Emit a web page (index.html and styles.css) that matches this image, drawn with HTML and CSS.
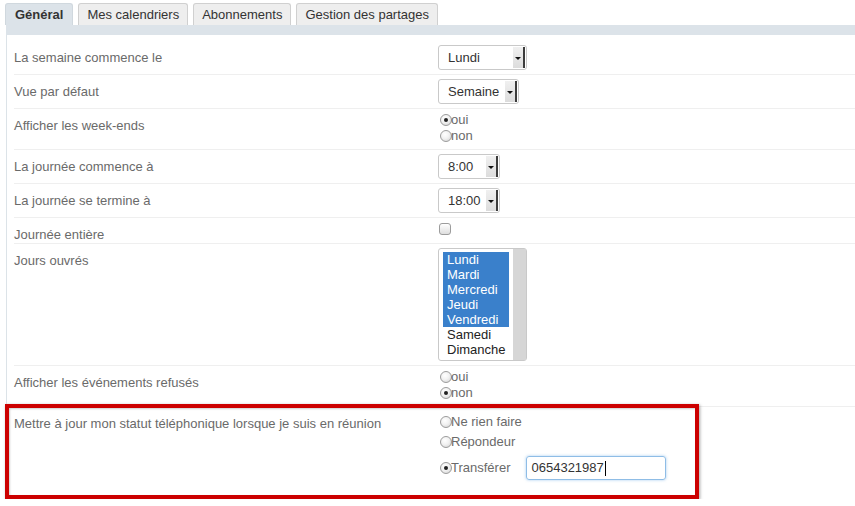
FILE: index.html
```html
<!DOCTYPE html>
<html lang="fr">
<head>
<meta charset="utf-8">
<title>Préférences du calendrier</title>
<link rel="stylesheet" href="styles.css">
</head>
<body>
<ul class="tabs">
  <li class="tab active">Général</li>
  <li class="tab">Mes calendriers</li>
  <li class="tab">Abonnements</li>
  <li class="tab">Gestion des partages</li>
</ul>
<div class="band"></div>
<div class="panel">
  <div class="row">
    <div class="label">La semaine commence le</div>
    <div class="value"><div class="select w-lundi"><span class="sel-text">Lundi</span><span class="arrow"></span></div></div>
  </div>
  <div class="row">
    <div class="label">Vue par défaut</div>
    <div class="value"><div class="select w-semaine"><span class="sel-text">Semaine</span><span class="arrow"></span></div></div>
  </div>
  <div class="row">
    <div class="label">Afficher les week-ends</div>
    <div class="value radios">
      <div class="opt"><span class="radio checked"></span>oui</div>
      <div class="opt"><span class="radio"></span>non</div>
    </div>
  </div>
  <div class="row">
    <div class="label">La journée commence à</div>
    <div class="value"><div class="select w-hour"><span class="sel-text">8:00</span><span class="arrow"></span></div></div>
  </div>
  <div class="row">
    <div class="label">La journée se termine à</div>
    <div class="value"><div class="select w-hour"><span class="sel-text">18:00</span><span class="arrow"></span></div></div>
  </div>
  <div class="row">
    <div class="label">Journée entière</div>
    <div class="value"><div class="check-line"><span class="checkbox"></span></div></div>
  </div>
  <div class="row">
    <div class="label">Jours ouvrés</div>
    <div class="value">
      <div class="listbox">
        <div class="opts">
          <div class="item sel">Lundi</div>
          <div class="item sel">Mardi</div>
          <div class="item sel">Mercredi</div>
          <div class="item sel">Jeudi</div>
          <div class="item sel">Vendredi</div>
          <div class="item">Samedi</div>
          <div class="item">Dimanche</div>
        </div>
        <div class="scrollbar"></div>
      </div>
    </div>
  </div>
  <div class="row">
    <div class="label">Afficher les événements refusés</div>
    <div class="value radios">
      <div class="opt"><span class="radio"></span>oui</div>
      <div class="opt"><span class="radio checked"></span>non</div>
    </div>
  </div>
  <div class="row last">
    <div class="label">Mettre à jour mon statut téléphonique lorsque je suis en réunion</div>
    <div class="value phone">
      <div class="opt tall"><span class="radio"></span>Ne rien faire</div>
      <div class="opt tall"><span class="radio"></span>Répondeur</div>
      <div class="opt transfer"><span class="radio checked"></span>Transférer<div class="input"><span class="input-text">0654321987</span><span class="caret"></span></div></div>
    </div>
    <div class="highlight"></div>
  </div>
</div>
</body>
</html>
```

FILE: styles.css
```css
* { box-sizing: border-box; }

body {
  margin: 0;
  background: #fff;
  font-family: "Liberation Sans", Arial, sans-serif;
  font-size: 13px;
  color: #6a6a6a;
}

.tabs {
  display: flex;
  gap: 5px;
  margin: 0;
  padding: 3px 0 0 5px;
  list-style: none;
}

.tab {
  height: 22px;
  line-height: 21px;
  padding: 0 8px;
  border: 1px solid #d0d0d0;
  border-bottom: none;
  border-radius: 3px 3px 0 0;
  background: #eeeeee;
  color: #333;
}

.tab.active {
  background: #dce3e9;
  border-color: #d0d8de;
  font-weight: bold;
  padding: 0 9px;
}

.band {
  margin-left: 6px;
  height: 10px;
  background: #dce3e9;
}

.panel {
  margin-left: 6px;
  border-left: 1px solid #dce3e8;
  padding: 6px 0 0 7px;
}

.row {
  display: grid;
  grid-template-columns: 424px 1fr;
  border-bottom: 1px solid #efefef;
}

.row.last {
  position: relative;
  border-bottom: none;
  height: 92px;
}

.label {
  padding-top: 9px;
  line-height: 15px;
}

.value {
  padding: 4px 0;
}

.value.radios {
  padding: 3px 0 5px;
}

.value.phone {
  padding: 5px 0 0;
}

/* select */
.select {
  display: flex;
  height: 25px;
  border: 1px solid #c9c9c9;
  border-radius: 3px;
  background: #fff;
  color: #333;
  padding: 1px 1px 1px 0;
}

.w-lundi { width: 89px; }
.w-semaine { width: 81px; }
.w-hour { width: 62px; }

.sel-text {
  flex: 1;
  padding-left: 9px;
  line-height: 21px;
}

.arrow {
  width: 12px;
  background: linear-gradient(#f0f0f0, #dcdcdc);
  border-right: 2px solid #3c3c3c;
  display: flex;
  align-items: center;
  justify-content: center;
}

.arrow::after {
  content: "";
  border-left: 3px solid transparent;
  border-right: 3px solid transparent;
  border-top: 3px solid #111;
  margin-top: 2px;
}

/* radios */
.opt {
  display: flex;
  align-items: center;
  line-height: 16px;
  height: 16px;
}

.opt.tall {
  line-height: 20px;
  height: 20px;
}

.opt.transfer {
  margin-top: 4px;
  height: 24px;
}

.radio {
  width: 12px;
  height: 12px;
  margin: 0 -1px 0 2px;
  border: 1px solid #9c9c9c;
  border-radius: 50%;
  background: radial-gradient(circle at 40% 35%, #ffffff 0%, #f2f2f2 45%, #cfcfcf 100%);
  display: inline-flex;
  align-items: center;
  justify-content: center;
  flex: none;
}

.radio.checked::after {
  content: "";
  width: 4px;
  height: 4px;
  border-radius: 50%;
  background: #222;
}

/* checkbox */
.check-line {
  height: 17px;
  padding-top: 1px;
}

.checkbox {
  display: block;
  width: 12px;
  height: 12px;
  margin-left: 1px;
  border: 1px solid #9c9c9c;
  border-radius: 3px;
  background: linear-gradient(#ffffff, #dedede);
}

/* listbox */
.listbox {
  display: flex;
  width: 89px;
  height: 113px;
  border: 1px solid #c9c9c9;
  border-radius: 3px;
  background: #fff;
  color: #222;
}

.opts {
  width: 66px;
  margin: 3px 0 0 4px;
}

.item {
  line-height: 15px;
  height: 15px;
  padding-left: 4px;
  white-space: nowrap;
}

.item.sel {
  background: #3a80cb;
  color: #fff;
}

.scrollbar {
  width: 13px;
  margin-left: auto;
  background: #d6d6d6;
}

/* text input */
.input {
  display: flex;
  align-items: center;
  width: 140px;
  height: 24px;
  margin-left: 16px;
  padding-left: 4px;
  border: 1px solid #8fbde6;
  border-radius: 3px;
  box-shadow: 0 0 3px rgba(90, 160, 225, 0.55);
  color: #333;
}

.caret {
  width: 1px;
  height: 15px;
  margin-left: 1px;
  background: #000;
}

/* annotation overlay */
.highlight {
  position: absolute;
  left: -9px;
  top: -3px;
  width: 694px;
  height: 95px;
  border: 4px solid #cc0000;
  box-shadow: 1px 1px 3px rgba(0, 0, 0, 0.35), inset 1px 1px 2px rgba(0, 0, 0, 0.2);
  pointer-events: none;
}
```
